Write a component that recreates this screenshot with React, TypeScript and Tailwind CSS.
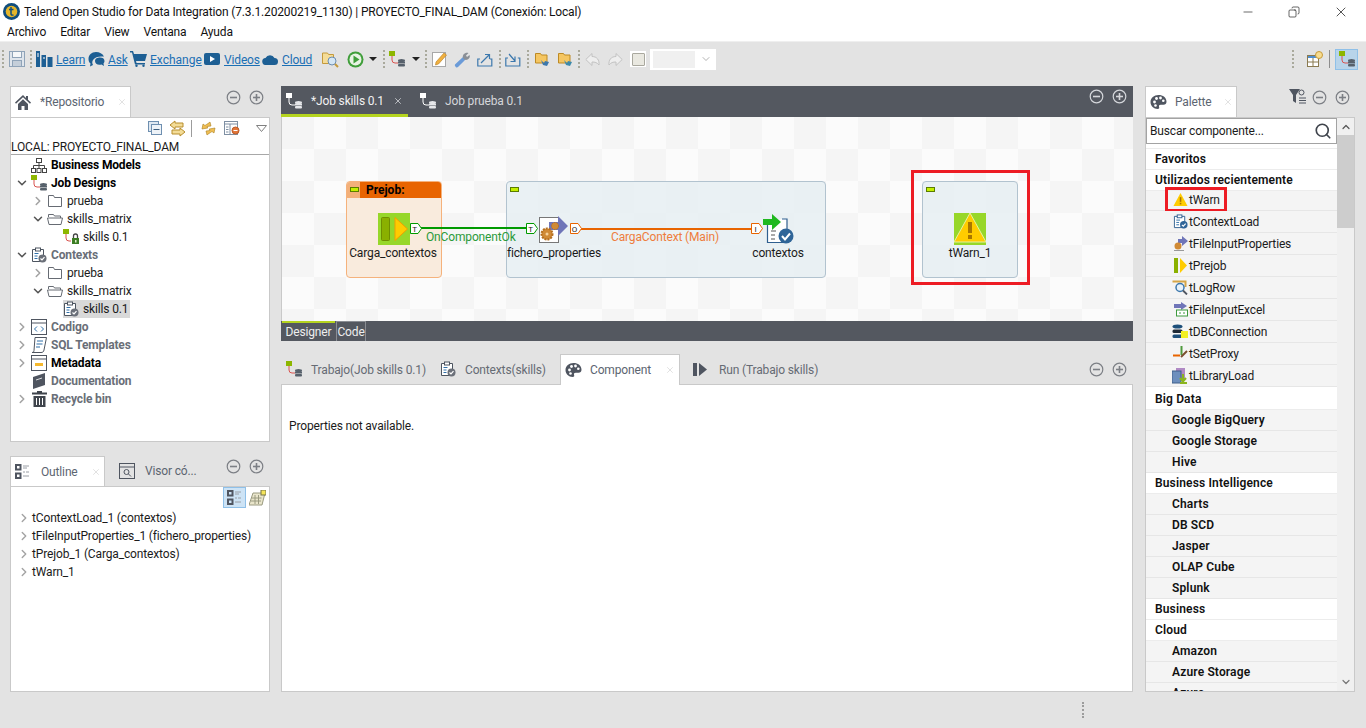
import type { ReactNode } from 'react'
import { ChevronDown, ChevronRight, Search, X, Minus, Copy } from 'lucide-react'

const ink = '#4f5560'

function CircleBtn({ sign, light }: { sign: 'min' | 'max'; light?: boolean }) {
  const c = light ? '#d5d7db' : '#7c7f85'
  return (
    <svg width="15" height="15" viewBox="0 0 15 15" fill="none" stroke={c} strokeWidth="1.2">
      <circle cx="7.5" cy="7.5" r="6.3" />
      <path d="M4 7.5h7" strokeWidth="1.6" />
      {sign === 'max' && <path d="M7.5 4v7" strokeWidth="1.6" />}
    </svg>
  )
}

function JobIcon({ light, size = 16 }: { light?: boolean; size?: number }) {
  return (
    <svg width={size} height={size} viewBox="0 0 16 16">
      <rect x="0" y="0" width="6" height="5" fill={light ? '#fff' : '#8db600'} />
      <path d="M3 5v4q0 3 3 3h3" fill="none" stroke={light ? '#fff' : '#d9534f'} strokeWidth="1" />
      <ellipse cx="12.5" cy="9.5" rx="3.5" ry="1.5" fill={light ? '#e6e7ea' : '#56606b'} />
      <rect x="9" y="10.5" width="7" height="2" fill={light ? '#e6e7ea' : '#56606b'} />
      <rect x="9" y="13" width="7" height="2.5" rx="1" fill={light ? '#e6e7ea' : '#56606b'} />
    </svg>
  )
}

function ContextIcon({ color = '#4d5560', check = '#6b7079', size = 16 }: { color?: string; check?: string; size?: number }) {
  return (
    <svg width={size} height={size} viewBox="0 0 16 16" fill="none">
      <path d="M1.5 2.5h11v12h-11z" stroke={color} fill="#fff" />
      <rect x="4.5" y="1" width="5" height="3" fill="#fff" stroke={color} />
      <path d="M3.5 6.5h4M3.5 9h3M3.5 11.5h3" stroke="#2f6fa8" />
      <circle cx="11.5" cy="11.5" r="4" fill={check} />
      <path d="M9.5 11.5l1.5 1.5 2.5-2.8" stroke="#fff" strokeWidth="1.2" />
    </svg>
  )
}

function PaletteIcon() {
  return (
    <svg width="17" height="16" viewBox="0 0 17 16">
      <path d="M8.5 1C4 1 .5 4.2.5 8c0 3.8 3.4 7 7 7 1.6 0 2-1 1.6-2-.5-1.3.3-2.2 1.6-2.2h2.8c1.8 0 3-1.3 3-3C16.500 3.600 13 1 8.500 1z" fill="#4f5560" />
      <circle cx="4.500" cy="8" r="1.400" fill="#fff" />
      <circle cx="6.500" cy="4.500" r="1.400" fill="#fff" />
      <circle cx="10.500" cy="4" r="1.400" fill="#fff" />
      <circle cx="13.300" cy="6.800" r="1.300" fill="#fff" />
      <circle cx="5.500" cy="11.500" r="1.300" fill="#fff" />
    </svg>
  )
}

function FolderOutline({ open }: { open?: boolean }) {
  return (
    <svg width="16" height="14" viewBox="0 0 16 14" fill="none" stroke="#666b73">
      {open ? (
        <path d="M1.500 5V2.500h5l1 1.500h6V6M.5 6h15l-1.500 6.500H2z" />
      ) : (
        <path d="M1.500 1.500h5l1 2h7v9h-13z" />
      )}
    </svg>
  )
}

function Warn({ size = 16 }: { size?: number }) {
  return (
    <svg width={size} height={size} viewBox="0 0 16 16">
      <path d="M8 1L15.500 15H.5z" fill="#ffcc00" />
      <rect x="7.200" y="5.500" width="1.700" height="5" fill="#a87700" />
      <rect x="7.200" y="11.500" width="1.700" height="1.700" fill="#a87700" />
    </svg>
  )
}

function Grip() {
  return <div className="h-[18px] w-[2px] border-l-2 border-dotted border-[#a9a99c]" />
}

function ToolLink({ children, className }: { children: ReactNode; className: string }) {
  return <span className={`mt-[1px] text-[#1b6fb4] underline ${className}`}>{children}</span>
}

function Toolbar() {
  return (
    <div className="flex h-[34px] items-center bg-[#e3e3e3]">
      <div className="ml-[2px]"><Grip /></div>
      <svg className="ml-[5px]" width="16" height="16" viewBox="0 0 16 16" fill="none" stroke="#8fa3b8">
        <rect x=".5" y=".5" width="15" height="15" fill="#dfe5ec" />
        <rect x="3.500" y=".5" width="9" height="6" fill="#f5f7f9" />
        <rect x="3.500" y="9.500" width="9" height="6" fill="#c4ced9" />
      </svg>
      <div className="ml-[5px]"><Grip /></div>
      <svg className="ml-[4px]" width="17" height="16" viewBox="0 0 17 16" fill="#1d5f94">
        <rect x="0" y="0" width="4" height="16" />
        <rect x="5.500" y="4" width="4.500" height="12" />
        <rect x="11.500" y="6" width="5" height="10" />
        <path d="M1 3h2M1 5h2M7 7h2" stroke="#fff" />
      </svg>
      <ToolLink className="ml-[3px] w-[30px]">Learn</ToolLink>
      <svg className="ml-[2px]" width="17" height="16" viewBox="0 0 17 16" fill="#1d5f94">
        <path d="M8 1C3.500 1 .5 4 .5 8c0 2 .8 3.500 2 4.500L2 15.500l3-1.500c-1-1.500-1-3.500 0-5 1.500-2.500 5-3.500 8-3.500h3C14.500 2.500 11.500 1 8 1z" />
        <path d="M7 10c0-2.500 2.500-3.500 5-3.500s4.500 1 4.500 3.500c0 1.500-1 2.500-1 2.500l.5 2.500-2.500-1.500C10 14.500 7 13 7 10z" />
      </svg>
      <ToolLink className="ml-[3px] w-[20px]">Ask</ToolLink>
      <svg className="ml-[2px]" width="17" height="16" viewBox="0 0 17 16" fill="#1d5f94">
        <path d="M0 0h3l1 3h13l-2 7H6l.5 2H15v1.500H5L2 1.500H0z" />
        <circle cx="6.500" cy="14.800" r="1.200" />
        <circle cx="13.500" cy="14.800" r="1.200" />
      </svg>
      <ToolLink className="ml-[3px] w-[51px] tracking-normal">Exchange</ToolLink>
      <svg className="ml-[3px]" width="16" height="12" viewBox="0 0 16 12">
        <rect width="16" height="12" rx="2" fill="#1d5f94" />
        <path d="M6 3l5 3-5 3z" fill="#fff" />
      </svg>
      <ToolLink className="ml-[4px] w-[35px]">Videos</ToolLink>
      <svg className="ml-[3px]" width="16" height="11" viewBox="0 0 16 11" fill="#1d5f94">
        <path d="M4 11a3.500 3.500 0 01-.5-7A5 5 0 0112.500 4 3.500 3.500 0 0112.500 11z" />
      </svg>
      <ToolLink className="ml-[4px] w-[32px]">Cloud</ToolLink>
      <svg className="ml-[8px]" width="17" height="17" viewBox="0 0 17 17">
        <path d="M.5 2h5l1 1.500h5v9H.5z" fill="#f5dc97" stroke="#c49a3c" />
        <circle cx="10" cy="10" r="4" fill="#d4e6f5" stroke="#6c8db0" />
        <path d="M13 13l3 3" stroke="#c49a3c" strokeWidth="2" />
      </svg>
      <svg className="ml-[8px]" width="17" height="17" viewBox="0 0 17 17">
        <circle cx="8.500" cy="8.500" r="8" fill="#3f9e3a" />
        <circle cx="8.500" cy="8.500" r="6" fill="#e8f3e4" />
        <path d="M6.500 4.500l6 4-6 4z" fill="#3f9e3a" />
      </svg>
      <div className="ml-[5px] h-0 w-0 border-x-[4px] border-t-[4px] border-x-transparent border-t-[#222]" />
      <div className="ml-[6px]"><Grip /></div>
      <div className="ml-[4px]"><JobIcon /></div>
      <div className="ml-[7px] h-0 w-0 border-x-[4px] border-t-[4px] border-x-transparent border-t-[#222]" />
      <div className="ml-[5px]"><Grip /></div>
      <svg className="ml-[5px]" width="15" height="16" viewBox="0 0 15 16">
        <rect x=".5" y="1.500" width="13" height="14" fill="#fff" stroke="#a8a8a8" />
        <path d="M4 11l8-9 2.500 2-8 9-3 1z" fill="#f0b040" stroke="#b57c1e" strokeWidth=".6" />
      </svg>
      <svg className="ml-[7px]" width="17" height="17" viewBox="0 0 17 17">
        <path d="M1.500 15.500a1.500 1.500 0 010-2.500L9 6l2.500 2.500L4 16a1.500 1.500 0 01-2.500-.5z" fill="#6b9bd8" />
        <path d="M9 7c-1-3 2-6 5.500-5L12 4.500l1 1.500 2.500-2C17 7 13 10 10.500 8.500z" fill="#8a8f96" />
      </svg>
      <svg className="ml-[6px]" width="16" height="15" viewBox="0 0 16 15" fill="none" stroke="#3c78ad" strokeWidth="1.200">
        <path d="M3 7H.8v7h14V7h-2" />
        <path d="M4 11l8-8M8 2.500h4.500V7" />
      </svg>
      <div className="ml-[6px]"><Grip /></div>
      <svg className="ml-[4px]" width="16" height="15" viewBox="0 0 16 15" fill="none" stroke="#3c78ad" strokeWidth="1.200">
        <path d="M3 6H.8v8h14V6h-2" />
        <path d="M4 2l6 7M10 4.500V9.500H5.500" />
      </svg>
      <div className="ml-[6px]"><Grip /></div>
      {['#3c78ad', '#3c8aad'].map((c, i) => (
        <svg key={c} className={i === 0 ? 'ml-[6px]' : 'ml-[8px]'} width="15" height="15" viewBox="0 0 15 15">
          <path d="M.5 1.500h5l1 1.500h5.500v8H.5z" fill="#f5c662" stroke="#bd8a25" />
          <path d="M6 8l3 3 1-2 4 1-2 4-4-1z" fill={c} />
        </svg>
      ))}
      <div className="ml-[5px]"><Grip /></div>
      <svg className="ml-[5px]" width="16" height="15" viewBox="0 0 16 15" fill="#eeeeee" stroke="#c2c2c2">
        <path d="M7 1.500L.8 7.500 7 13.500V10c3 0 5 .5 7 3 .5-5-2-8.500-7-8.500z" />
      </svg>
      <svg className="ml-[6px]" width="16" height="15" viewBox="0 0 16 15" fill="#eeeeee" stroke="#c2c2c2">
        <path d="M9 1.500l6.200 6L9 13.500V10c-3 0-5 .5-7 3C1.500 8 4 4.500 9 4.500z" />
      </svg>
      <div className="ml-[7px] flex h-[16px] w-[16px] items-center justify-center bg-white">
        <div className="h-[13px] w-[13px] rounded-[1px] border border-[#a9a89e] bg-[#e9e8e0]" />
      </div>
      <div className="ml-[4px] flex h-[21px] w-[66px] items-center border border-white bg-white pl-[2px]">
        <div className="h-[17px] w-[42px] bg-[#f0f0f0]" />
        <ChevronDown className="ml-[5px] text-[#8a8a8a]" size={12} strokeWidth={1.300} />
      </div>
      <div className="ml-auto"><Grip /></div>
      <svg className="ml-[13px]" width="16" height="16" viewBox="0 0 16 16">
        <rect x=".5" y="4.500" width="11" height="11" fill="#fff" stroke="#8a7a50" />
        <rect x="1" y="5" width="10" height="2" fill="#4f8fd0" />
        <path d="M6 7v8M1 11h10" stroke="#8a7a50" />
        <circle cx="12" cy="4" r="3.500" fill="#f7dc8f" stroke="#c69a3a" />
      </svg>
      <div className="ml-[6px] h-[18px] w-px bg-[#8d8d8d]" />
      <div className="ml-[5px] mr-[8px] flex h-[21px] w-[23px] items-center justify-center border border-[#8fc0e8] bg-[#b8d4ea]">
        <JobIcon />
      </div>
    </div>
  )
}

function PanelTab({ icon, label, width, gap }: { icon: ReactNode; label: string; width: string; gap: string }) {
  return (
    <div className={`flex h-full items-center border border-b-0 border-[#c9c9c9] bg-white pl-[4px] ${width}`}>
      {icon}
      <span className={`text-[#5c6571] ${gap}`}>{label}</span>
      <X className="ml-auto mr-[3px] text-[#dcdcdc]" size={10} />
    </div>
  )
}

type TreeProps = {
  level: number
  open?: boolean
  leaf?: boolean
  icon: ReactNode
  label: string
  tone?: 'strong' | 'muted' | 'plain'
  selected?: boolean
}

function TreeRow({ level, open, leaf, icon, label, tone = 'plain', selected }: TreeProps) {
  const tones = {
    strong: 'font-bold text-black',
    muted: 'font-bold text-[#6a6f78]',
    plain: 'text-[#1b1b1b]',
  }
  const pad = ['pl-[5px]', 'pl-[21px]', 'pl-[37px]'][level]
  return (
    <div className={`flex h-[18px] items-center ${pad}`}>
      <div className="flex w-[12px] justify-center">
        {!leaf &&
          (open ? (
            <ChevronDown size={14} strokeWidth={2.600} className="shrink-0 text-[#555]" />
          ) : (
            <ChevronRight size={14} strokeWidth={2.600} className="shrink-0 text-[#a3a3a3]" />
          ))}
      </div>
      <div className={`ml-[3px] flex h-[18px] items-center ${selected ? 'bg-[#d9d9d9] pr-[2px]' : ''}`}>
        <div className="flex w-[16px] justify-center">{icon}</div>
        <span className={`ml-[4px] ${tones[tone]}`}>{label}</span>
      </div>
    </div>
  )
}

function Repository() {
  return (
    <section className="flex h-[356px] flex-col">
      <div className="flex h-[31px] items-stretch">
        <PanelTab
          width="w-[121px]"
          gap="ml-[9px]"
          label="*Repositorio"
          icon={
            <svg width="16" height="15" viewBox="0 0 16 15" fill="#4f5560">
              <path d="M8 0L0 7.500l1 1.200L8 2.300l7 6.400 1-1.200-3-2.800V1h-2v2z" />
              <path d="M3 9l5-4.700L13 9v6H9.500v-4h-3v4H3z" />
            </svg>
          }
        />
        <div className="ml-auto mr-[6px] mt-[4px] flex gap-[8px]">
          <div className="h-[15px]"><CircleBtn sign="min" /></div>
          <div className="h-[15px]"><CircleBtn sign="max" /></div>
        </div>
      </div>
      <div className="flex-1 border border-[#c9c9c9] bg-white">
        <div className="flex h-[20px] items-center pl-[137px]">
          <svg width="14" height="14" viewBox="0 0 14 14" fill="none" stroke="#6e8fb0">
            <rect x=".5" y=".5" width="10" height="10" fill="#dfe8f1" />
            <rect x="3.500" y="3.500" width="10" height="10" fill="#eef3f8" />
            <path d="M5.500 8.500h6" stroke="#3d5f80" />
          </svg>
          <svg className="ml-[7px]" width="17" height="17" viewBox="0 0 17 17" fill="#f3dc97" stroke="#b78d2c">
            <path d="M6 1L1 5l5 4V7h8V3H6zM11 8l5 4-5 4v-2H3v-4h8z" />
          </svg>
          <div className="ml-[5px] h-[17px] w-px bg-[#9c9c9c]" />
          <svg className="ml-[9px]" width="15" height="15" viewBox="0 0 15 15" fill="#f0be53" stroke="#a9801f" strokeWidth=".6">
            <path d="M1 8l1-5 2 1.500C6 3 8 2 9 1l1 4-4 .5.8 1.500zM14 7l-1 5-2-1.500C9 12 7 13 6 14l-1-4 4-.5-.8-1.500z" />
          </svg>
          <svg className="ml-[8px]" width="16" height="15" viewBox="0 0 16 15" fill="none" stroke="#7e8fa3">
            <rect x=".5" y=".5" width="13" height="13" fill="#fff" />
            <path d="M.5 3h13M6 3v10M2 6h2.500M2 8.500h2.500M2 11h2.500" />
            <circle cx="11.500" cy="9.500" r="3.500" fill="#e2763a" stroke="#bb5a26" />
            <path d="M9.500 9.500h4" stroke="#fff" />
          </svg>
          <svg className="ml-[16px]" width="11" height="7" viewBox="0 0 11 7" fill="none" stroke="#808080">
            <path d="M.5.5h10L5.500 6.500z" />
          </svg>
        </div>
        <div className="flex h-[17px] items-center border-b border-[#a8a8a8] pt-[1px] text-[#1b1b1b]">LOCAL: PROYECTO_FINAL_DAM</div>
        <div className="pt-[1px]">
          <TreeRow
            level={0}
            leaf
            tone="strong"
            label="Business Models"
            icon={
              <svg width="16" height="15" viewBox="0 0 16 15" fill="none" stroke="#444">
                <rect x="5.500" y=".5" width="5" height="4" />
                <rect x=".5" y="10.500" width="4" height="4" />
                <rect x="6" y="10.500" width="4" height="4" />
                <rect x="11.500" y="10.500" width="4" height="4" />
                <path d="M8 4.500v6M2.500 10.500V7.500h11v3" />
              </svg>
            }
          />
          <TreeRow level={0} open tone="strong" label="Job Designs" icon={<JobIcon />} />
          <TreeRow level={1} label="prueba" icon={<FolderOutline />} />
          <TreeRow level={1} open label="skills_matrix" icon={<FolderOutline open />} />
          <TreeRow
            level={2}
            leaf
            label="skills 0.1"
            icon={
              <svg width="16" height="16" viewBox="0 0 16 16">
                <rect x="0" y="0" width="6" height="5" fill="#8db600" />
                <path d="M3 5v4q0 3 3 3h2" fill="none" stroke="#d9534f" />
                <rect x="9" y="9" width="7" height="6" fill="#3b7d23" />
                <path d="M10.500 9V7a2 2 0 014 0v2" fill="none" stroke="#444" strokeWidth="1.300" />
                <rect x="12" y="11" width="1.500" height="2.500" fill="#dff0c8" />
              </svg>
            }
          />
          <TreeRow level={0} open tone="muted" label="Contexts" icon={<ContextIcon />} />
          <TreeRow level={1} label="prueba" icon={<FolderOutline />} />
          <TreeRow level={1} open label="skills_matrix" icon={<FolderOutline open />} />
          <TreeRow level={2} leaf selected label="skills 0.1" icon={<ContextIcon />} />
          <TreeRow
            level={0}
            tone="muted"
            label="Codigo"
            icon={
              <svg width="16" height="16" viewBox="0 0 16 16" fill="none" stroke="#4f5560">
                <rect x=".5" y=".5" width="15" height="15" fill="#fff" />
                <path d="M.5 4h15" />
                <path d="M6 7.500L3.500 10 6 12.500M10 7.500L12.500 10 10 12.500" stroke="#2f6fa8" />
              </svg>
            }
          />
          <TreeRow
            level={0}
            tone="muted"
            label="SQL Templates"
            icon={
              <svg width="16" height="16" viewBox="0 0 16 16" fill="none" stroke="#4f5560">
                <path d="M4 .5h11.500L13 13c-.3 2-1.500 2.500-3 2.500H1c1.500 0 2-1 2-2z" fill="#fff" />
                <path d="M6 4h6M5.500 7h6M5 10h4" stroke="#2f6fa8" />
              </svg>
            }
          />
          <TreeRow
            level={0}
            tone="strong"
            label="Metadata"
            icon={
              <svg width="16" height="16" viewBox="0 0 16 16" fill="none" stroke="#4f5560">
                <rect x=".5" y=".5" width="15" height="15" fill="#fff" />
                <path d="M.5 4h15" />
                <rect x="4" y="8" width="8" height="3" fill="#f5b82e" stroke="none" />
              </svg>
            }
          />
          <TreeRow
            level={0}
            leaf
            tone="muted"
            label="Documentation"
            icon={
              <svg width="14" height="16" viewBox="0 0 14 16" fill="#4f5560">
                <path d="M1 4l12-4v12L1 16z" />
                <path d="M4 7l6-2" stroke="#fff" strokeWidth=".8" />
              </svg>
            }
          />
          <TreeRow
            level={0}
            tone="muted"
            label="Recycle bin"
            icon={
              <svg width="15" height="16" viewBox="0 0 15 16" fill="#3f444c">
                <path d="M5 0h5v1.500h5V3.500H0V1.500h5z" />
                <path d="M1.500 5h12v11h-12z" />
                <path d="M4.500 7v7M7.500 7v7M10.500 7v7" stroke="#fff" />
              </svg>
            }
          />
        </div>
      </div>
    </section>
  )
}

const outlineRows = [
  'tContextLoad_1 (contextos)',
  'tFileInputProperties_1 (fichero_properties)',
  'tPrejob_1 (Carga_contextos)',
  'tWarn_1',
]

function OutlineIcon() {
  return (
    <svg width="15" height="15" viewBox="0 0 15 15" fill="none" stroke="#4f5560">
      <rect x="1" y="1" width="4.500" height="4.500" strokeWidth="2" />
      <rect x="1" y="9.500" width="4.500" height="4.500" strokeWidth="2" />
      <path d="M8 2h6M8 4h4M8 8h2M11 8h3M8 12h6" stroke="#9a9ea5" />
    </svg>
  )
}

function Outline() {
  return (
    <section className="mt-[14px] flex flex-1 flex-col">
      <div className="flex h-[30px] items-stretch">
        <PanelTab width="w-[95px]" gap="ml-[11px]" label="Outline" icon={<OutlineIcon />} />
        <div className="ml-[14px] flex items-center">
          <svg width="16" height="16" viewBox="0 0 16 16" fill="none" stroke="#4f5560">
            <rect x=".5" y=".5" width="15" height="15" />
            <path d="M.5 4h15" />
            <circle cx="7.500" cy="9" r="2.500" />
            <path d="M9.500 11l2.500 2.500" />
          </svg>
          <span className="ml-[10px] text-[#5c6571]">Visor có...</span>
        </div>
        <div className="ml-auto mr-[6px] mt-[3px] flex gap-[8px]">
          <div className="h-[15px]"><CircleBtn sign="min" /></div>
          <div className="h-[15px]"><CircleBtn sign="max" /></div>
        </div>
      </div>
      <div className="flex-1 border border-[#c9c9c9] bg-white">
        <div className="flex h-[21px] items-center justify-end pr-[3px]">
          <div className="flex h-[21px] w-[23px] items-center justify-center border border-[#8fc0e8] bg-[#cde3f5]"><OutlineIcon /></div>
          <svg className="ml-[3px]" width="17" height="16" viewBox="0 0 17 16">
            <path d="M4 3h12l-3 12H0z" fill="#e9e5cb" stroke="#9a9a80" />
            <path d="M2.500 8h10M2 11h10M6 5v9M9.500 5v9" stroke="#9a9a80" />
            <rect x="12" y="0" width="5" height="5" fill="#f5e55a" stroke="#77744a" />
          </svg>
        </div>
        <div className="pt-[1px]">
          {outlineRows.map((row) => (
            <div key={row} className="flex h-[18px] items-center pl-[6px] text-[#1b1b1b]">
              <ChevronRight size={14} strokeWidth={2.400} className="shrink-0 text-[#a3a3a3]" />
              <span className="ml-[1px] whitespace-nowrap">{row}</span>
            </div>
          ))}
        </div>
      </div>
    </section>
  )
}

function Connector({ letter, color, className }: { letter: string; color: string; className: string }) {
  return (
    <svg className={`absolute ${className}`} width="12" height="11" viewBox="0 0 12 11">
      <path d="M.5.5h7.500l3.500 5-3.500 5H.5z" fill="#fff" stroke={color} />
      <text x="4.500" y="8.500" fontSize="8" textAnchor="middle" fill="#222">{letter}</text>
    </svg>
  )
}

function Canvas() {
  return (
    <div className="relative flex-1 overflow-hidden border-l border-[#c9c9c9] bg-[conic-gradient(#fbfbfb_25%,#f5f5f5_0_50%,#fbfbfb_0_75%,#f5f5f5_0)] bg-[length:64px_64px]">
      {/* Prejob subjob */}
      <div className="absolute left-[64px] top-[64px] h-[97px] w-[96px] overflow-hidden rounded-[4px] border border-[#f5b27c] bg-[#f9ebdd]">
        <div className="flex h-[16px] bg-[#f3b07a]">
          <div className="ml-[3px] mt-[5px] h-[5px] w-[9px] border border-[#5b7d00] bg-[#c4ef00]" />
          <div className="ml-[1px] w-[82px] flex-1 bg-[#e86400] pl-[6px] text-[12px] font-bold leading-[16px] tracking-normal text-black">Prejob:</div>
        </div>
      </div>
      {/* main subjob */}
      <div className="absolute left-[224px] top-[64px] h-[97px] w-[320px] rounded-[4px] border border-[#b2c3cf] bg-[#e8eff3]/90">
        <div className="ml-[3px] mt-[5px] h-[5px] w-[9px] border border-[#5b7d00] bg-[#c4ef00]" />
      </div>
      {/* warn subjob */}
      <div className="absolute left-[640px] top-[64px] h-[97px] w-[96px] rounded-[4px] border border-[#b2c3cf] bg-[#e8eff3]/90">
        <div className="ml-[3px] mt-[5px] h-[5px] w-[9px] border border-[#5b7d00] bg-[#c4ef00]" />
      </div>
      <div className="absolute left-[629px] top-[53px] h-[115px] w-[119px] border-[3px] border-[#ed1c24]" />

      {/* links */}
      <div className="absolute left-[139px] top-[110px] h-[2px] w-[106px] bg-[#009a00]" />
      <div className="absolute left-[299px] top-[111px] h-[2px] w-[172px] bg-[#e86400]" />
      <span className="absolute left-[144px] top-[112px] text-[#2b9a3a]">OnComponentOk</span>
      <span className="absolute left-[329px] top-[112px] text-[#ee7d3c]">CargaContext (Main)</span>

      {/* tPrejob */}
      <div className="absolute left-[96px] top-[96px] flex h-[32px] w-[32px] items-center bg-[#97d729]">
        <svg width="32" height="32" viewBox="0 0 32 32">
          <rect x="3.500" y="4.500" width="8" height="23" rx="1" fill="#8ab000" stroke="#6f8f00" />
          <path d="M17 4.500L29.500 16 17 27.500z" fill="#ffcc00" stroke="#f0a000" />
        </svg>
      </div>
      <Connector letter="T" color="#009a00" className="left-[128px] top-[106px]" />
      <span className="absolute left-[51px] top-[128px] w-[120px] text-center text-[#1b1b1b]">Carga_contextos</span>

      {/* tFileInputProperties */}
      <Connector letter="T" color="#009a00" className="left-[244px] top-[106px]" />
      <svg className="absolute left-[257px] top-[99px]" width="30" height="27" viewBox="0 0 30 27">
        <rect x=".5" y="1.500" width="19" height="25" fill="#fff" stroke="#777" />
        <path d="M10 6h9V0l10 10-10 10v-6H10z" fill="#6f75b8" />
        <circle cx="8" cy="18" r="5.500" fill="#d08a35" stroke="#b56f1f" strokeDasharray="2 1" strokeWidth="2" />
        <circle cx="8" cy="18" r="1.500" fill="#f5d09a" />
        <circle cx="16" cy="10" r="3.500" fill="#d08a35" stroke="#b56f1f" strokeDasharray="1.500 1" />
      </svg>
      <Connector letter="O" color="#e86400" className="left-[288px] top-[106px]" />
      <span className="absolute left-[212px] top-[128px] w-[120px] text-center text-[#1b1b1b]">fichero_properties</span>

      {/* tContextLoad */}
      <Connector letter="I" color="#e86400" className="left-[469px] top-[106px]" />
      <svg className="absolute left-[481px] top-[97px]" width="31" height="30" viewBox="0 0 31 30">
        <path d="M4.500 8V28.500H24V5h-5" fill="#fff" stroke="#2f5f8f" strokeWidth="1.200" />
        <path d="M8 17h5M8 21h4M8 25h4" stroke="#555" />
        <path d="M0 5h9V0l9 8-9 8v-5H0z" fill="#1fb81f" />
        <circle cx="23" cy="22" r="7.500" fill="#2f6598" />
        <path d="M19 22l3 3.500 5-6" fill="none" stroke="#fff" strokeWidth="2" />
      </svg>
      <span className="absolute left-[436px] top-[128px] w-[120px] text-center text-[#1b1b1b]">contextos</span>

      {/* tWarn */}
      <div className="absolute left-[672px] top-[96px] h-[32px] w-[32px] bg-[#97d729]">
        <svg width="32" height="32" viewBox="0 0 32 32">
          <path d="M16 0L32 29H0z" fill="#ffcc00" stroke="#e4f2a0" strokeWidth="1" />
          <rect x="14" y="9" width="4" height="11" fill="#a87700" />
          <rect x="14" y="22" width="4" height="4" fill="#a87700" />
        </svg>
      </div>
      <span className="absolute left-[628px] top-[128px] w-[120px] text-center text-[#1b1b1b]">tWarn_1</span>
    </div>
  )
}

function Editor() {
  return (
    <section className="flex h-[255px] flex-col">
      <div className="flex h-[31px] bg-[#545860] text-[#d4d6da]">
        <div className="flex w-[127px] items-center border-b-[3px] border-[#b5d41f] pl-[5px] pt-[2px]">
          <JobIcon light />
          <span className="ml-[9px] whitespace-nowrap text-[#f2f2f2]">*Job skills 0.1</span>
          <X size={10} className="ml-auto mr-[5px] text-[#cfd1d5]" />
        </div>
        <div className="ml-[12px] flex items-center pb-[1px]">
          <JobIcon light />
          <span className="ml-[9px]">Job prueba 0.1</span>
        </div>
        <div className="ml-auto mr-[6px] mt-[3px] flex gap-[8px]">
          <div className="h-[15px]"><CircleBtn sign="min" light /></div>
          <div className="h-[15px]"><CircleBtn sign="max" light /></div>
        </div>
      </div>
      <Canvas />
      <div className="flex h-[20px] bg-[#545860] text-[#eeeeee]">
        <div className="ml-[1px] flex w-[53px] items-center justify-center border-t-2 border-[#b5d41f] pb-[1px]">Designer</div>
        <div className="ml-[1px] flex w-[30px] items-center justify-center border-x border-t border-[#8a8d93]">Code</div>
      </div>
    </section>
  )
}

function BottomPanel() {
  return (
    <section className="mt-[13px] flex flex-1 flex-col">
      <div className="flex h-[31px] items-center border-b border-[#c9c9c9] text-[#666b74]">
        <div className="ml-[5px]"><JobIcon /></div>
        <span className="ml-[9px] mt-[1px] w-[111px] whitespace-nowrap">Trabajo(Job skills 0.1)</span>
        <div className="ml-[18px]"><ContextIcon /></div>
        <span className="ml-[9px] mt-[1px] w-[81px] whitespace-nowrap">Contexts(skills)</span>
        <div className="ml-[14px] flex h-[31px] w-[120px] items-center border border-b-0 border-[#c9c9c9] bg-white pl-[4px]">
          <PaletteIcon />
          <span className="ml-[8px] mt-[1px] text-[#5c6571]">Component</span>
          <X size={10} className="ml-auto mr-[4px] text-[#dcdcdc]" />
        </div>
        <svg className="ml-[13px]" width="14" height="13" viewBox="0 0 14 13" fill={ink}>
          <rect x="0" y="0" width="4" height="13" />
          <path d="M6 0l8 6.500L6 13z" />
        </svg>
        <span className="ml-[12px] mt-[1px]">Run (Trabajo skills)</span>
        <div className="ml-auto mr-[6px] flex gap-[8px]">
          <div className="h-[15px]"><CircleBtn sign="min" /></div>
          <div className="h-[15px]"><CircleBtn sign="max" /></div>
        </div>
      </div>
      <div className="flex-1 border border-t-0 border-[#c9c9c9] bg-white pl-[7px] pt-[33px] text-[#1b1b1b]">Properties not available.</div>
    </section>
  )
}

const recents: { name: string; icon: ReactNode }[] = [
  { name: 'tWarn', icon: <Warn size={15} /> },
  { name: 'tContextLoad', icon: <ContextIcon color="#2f5f8f" check="#2f6598" size={15} /> },
  {
    name: 'tFileInputProperties',
    icon: (
      <svg width="15" height="15" viewBox="0 0 15 15">
        <path d="M5 3h4V0l6 5-6 5V7H5z" fill="#6f75b8" />
        <circle cx="5" cy="10" r="3.500" fill="#d08a35" />
        <path d="M1 14.500h10" stroke="#999" />
      </svg>
    ),
  },
  {
    name: 'tPrejob',
    icon: (
      <svg width="15" height="15" viewBox="0 0 15 15">
        <rect x="1" y="0" width="4" height="15" fill="#8ab000" />
        <path d="M7 0l7 7.500L7 15z" fill="#ffcc00" />
      </svg>
    ),
  },
  {
    name: 'tLogRow',
    icon: (
      <svg width="16" height="15" viewBox="0 0 16 15" fill="none">
        <path d="M.5 1.500h13V7" stroke="#d6a647" strokeWidth="2" />
        <circle cx="8" cy="7.500" r="4" stroke="#3c78ad" strokeWidth="1.500" fill="#e8f2fa" />
        <path d="M11 10.500l4 4" stroke="#4f5560" strokeWidth="1.800" />
      </svg>
    ),
  },
  {
    name: 'tFileInputExcel',
    icon: (
      <svg width="15" height="15" viewBox="0 0 15 15">
        <path d="M1 2h7V0l6 4-6 4V6H1z" fill="#6f75b8" />
        <rect x="3.500" y="8" width="11" height="6" fill="#fff" stroke="#3d9a3d" />
        <path d="M6 11h2M10 11h2" stroke="#3d9a3d" />
      </svg>
    ),
  },
  {
    name: 'tDBConnection',
    icon: (
      <svg width="16" height="15" viewBox="0 0 16 15">
        <ellipse cx="5.500" cy="2.500" rx="5" ry="2" fill="#1d4f7a" />
        <rect x=".5" y="5.500" width="10" height="3.500" rx="1.500" fill="#1f2a36" />
        <rect x=".5" y="10.500" width="10" height="3.500" rx="1.500" fill="#1d4f7a" />
        <rect x="9" y="7" width="7" height="7" fill="#f2ef22" />
      </svg>
    ),
  },
  {
    name: 'tSetProxy',
    icon: (
      <svg width="15" height="15" viewBox="0 0 15 15">
        <path d="M8.500 0v9" stroke="#4f9a3d" strokeWidth="2" />
        <path d="M0 9.500h7" stroke="#e86400" strokeWidth="2" />
        <path d="M8 11l6-6" stroke="#7a4f2d" strokeWidth="2" />
      </svg>
    ),
  },
  {
    name: 'tLibraryLoad',
    icon: (
      <svg width="16" height="16" viewBox="0 0 16 16">
        <rect x="4" y="0" width="9" height="12" fill="#b08ac4" />
        <rect x="0" y="3" width="9" height="12" fill="#6d8fbd" stroke="#3e5f8a" />
        <path d="M11 6v7M8 10l3 3.500L14 10M8 15h7" stroke="#8bb51f" strokeWidth="2" fill="none" />
      </svg>
    ),
  },
]

const groups: { title: string; items: string[]; gap?: boolean }[] = [
  { title: 'Big Data', items: ['Google BigQuery', 'Google Storage', 'Hive'], gap: true },
  { title: 'Business Intelligence', items: ['Charts', 'DB SCD', 'Jasper', 'OLAP Cube', 'Splunk'] },
  { title: 'Business', items: [] },
  { title: 'Cloud', items: ['Amazon', 'Azure Storage', 'Azure'] },
]

function PaletteHeader({ label }: { label: string }) {
  return (
    <div className="flex h-[21px] items-center border-b border-[#ececec] bg-white pl-[9px] font-semibold tracking-[0.15px] text-[#111]">
      {label}
    </div>
  )
}

function Palette() {
  return (
    <aside className="ml-[12px] mr-[11px] flex w-[210px] shrink-0 flex-col">
      <div className="flex h-[31px] items-stretch">
        <PanelTab width="w-[92px]" gap="ml-[8px]" label="Palette" icon={<PaletteIcon />} />
        <svg className="ml-[52px] mt-[3px]" width="18" height="15" viewBox="0 0 18 15" fill={ink}>
          <path d="M0 0h11L7 6v8L4 12V6z" />
          <path d="M10 9h7M10 11.500h7M10 14h7" stroke={ink} />
          <circle cx="12.500" cy="3.500" r="2.500" fill="none" stroke={ink} />
        </svg>
        <div className="ml-auto mr-[5px] mt-[4px] flex gap-[8px]">
          <div className="h-[15px]"><CircleBtn sign="min" /></div>
          <div className="h-[15px]"><CircleBtn sign="max" /></div>
        </div>
      </div>
      <div className="flex min-h-0 flex-1 border border-[#c9c9c9] bg-white">
        <div className="flex min-w-0 flex-1 flex-col">
          <div className="flex h-[26px] shrink-0 items-center border border-[#a3a3a3] pl-[3px] text-[#1b1b1b]">
            Buscar componente...
            <Search size={18} strokeWidth={2.200} className="ml-auto mr-[4px] text-[#3f444c]" />
          </div>
          <div className="h-[5px] shrink-0 border-b border-[#ececec]" />
          <div className="min-h-0 flex-1 overflow-hidden">
            <PaletteHeader label="Favoritos" />
            <PaletteHeader label="Utilizados recientemente" />
            {recents.map((r, i) => (
              <div
                key={r.name}
                className={`relative flex items-center border-b border-[#e6e6e6] bg-[#f4f4f4] pl-[26px] text-[#1b1b1b] ${i === 0 ? 'h-[20px] pb-[2px]' : 'h-[22px]'}`}
              >
                <div className="flex w-[16px] justify-center">{r.icon}</div>
                <span className="ml-[1px]">{r.name}</span>
                {r.name === 'tWarn' && (
                  <div className="absolute left-[19px] top-[-4px] h-[25px] w-[62px] border-[3px] border-[#ed1c24]" />
                )}
              </div>
            ))}
            {groups.map((g) => (
              <div key={g.title} className={g.gap ? 'mt-[2px]' : ''}>
                <PaletteHeader label={g.title} />
                {g.items.map((item) => (
                  <div
                    key={item}
                    className="flex h-[21px] items-center border-b border-[#e6e6e6] bg-[#f4f4f4] pl-[26px] font-semibold tracking-[0.15px] text-[#111]"
                  >
                    {item}
                  </div>
                ))}
              </div>
            ))}
          </div>
        </div>
        <div className="flex w-[17px] shrink-0 flex-col items-center bg-[#f0f0f0]">
          <ChevronDown size={12} strokeWidth={2.400} className="mt-[3px] rotate-180 text-[#555]" />
          <div className="mt-[2px] h-[93px] w-full bg-[#cdcdcd]" />
          <ChevronDown size={12} strokeWidth={2.400} className="mb-[3px] mt-auto text-[#777]" />
        </div>
      </div>
    </aside>
  )
}

export default function App() {
  return (
    <div className="flex h-[728px] w-[1366px] flex-col overflow-hidden bg-[#e3e3e3] font-['Roboto',sans-serif] text-[12px] leading-[16px] tracking-[-0.15px]">
      <header className="h-[42px] shrink-0 border-b border-[#efefef] bg-white">
        <div className="flex h-[23px] items-center pl-[3px]">
          <svg width="17" height="17" viewBox="0 0 17 17">
            <circle cx="8.500" cy="8.500" r="8.500" fill="#0f4d7d" />
            <circle cx="8.500" cy="8.500" r="5.800" fill="#e5b62a" />
            <path d="M8 4v7q0 1.500 2.500 1M6 6.500h4.500" fill="none" stroke="#0f4d7d" strokeWidth="1.500" />
          </svg>
          <span className="ml-[4px] text-[#111]">Talend Open Studio for Data Integration (7.3.1.20200219_1130) | PROYECTO_FINAL_DAM (Conexión: Local)</span>
          <Minus size={14} strokeWidth={1} className="ml-auto text-black" />
          <Copy size={12} strokeWidth={1.200} className="ml-[33px] -scale-x-100 text-black" />
          <X size={16} strokeWidth={1} className="ml-[33px] mr-[17px] text-black" />
        </div>
        <nav className="flex h-[18px] items-center pl-[7px] text-[#111]">
          <span>Archivo</span>
          <span className="ml-[14px]">Editar</span>
          <span className="ml-[14px]">View</span>
          <span className="ml-[14px]">Ventana</span>
          <span className="ml-[14px]">Ayuda</span>
        </nav>
      </header>
      <Toolbar />
      <main className="mt-[10px] flex h-[606px] shrink-0">
        <div className="ml-[10px] flex w-[260px] shrink-0 flex-col">
          <Repository />
          <Outline />
        </div>
        <div className="ml-[11px] flex w-[852px] shrink-0 flex-col">
          <Editor />
          <BottomPanel />
        </div>
        <Palette />
      </main>
      <footer className="flex flex-1 items-center justify-end pr-[282px]">
        <div className="h-[16px] w-[2px] border-l-2 border-dotted border-[#9c9c9c]" />
      </footer>
    </div>
  )
}
